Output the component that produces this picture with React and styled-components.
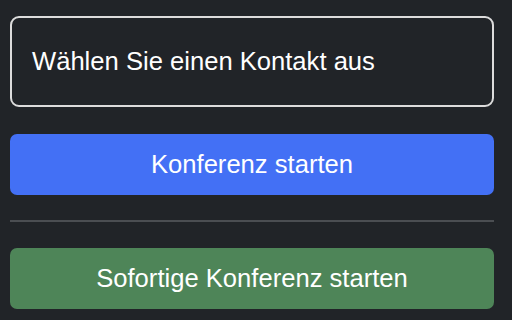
import React from "react";
import styled, { createGlobalStyle } from "styled-components";

const Global = createGlobalStyle`
  html, body { margin: 0; padding: 0; background: #212428; }
  body { font-family: "Liberation Sans", Arial, sans-serif; }
  * { box-sizing: border-box; }
`;

const Page = styled.div`
  display: flex;
  flex-direction: column;
  padding: 16px 18px 11px 10px;
  width: 512px;
  height: 320px;
  background: #212428;
`;

const Select = styled.div`
  height: 91px;
  border: 2px solid #dcdcdc;
  border-radius: 9px;
  background: #212428;
  color: #ffffff;
  font-size: 25.6px;
  display: flex;
  align-items: center;
  padding: 0 0 0 20px;
`;

const Button = styled.button`
  height: 61px;
  border: none;
  border-radius: 7px;
  background: ${(p) => p.$bg};
  color: #ffffff;
  font-family: "Liberation Sans", Arial, sans-serif;
  font-size: 25.6px;
  display: flex;
  align-items: center;
  justify-content: center;
  padding: 0;
  margin-top: ${(p) => p.$mt}px;
`;

const Divider = styled.hr`
  margin: 25px 0 0 0;
  border: none;
  height: 2px;
  background: #4b4e52;
`;

export default function App() {
  return (
    <>
      <Global />
      <Page>
        <Select>Wählen Sie einen Kontakt aus</Select>
        <Button $bg="#4370f5" $mt={27}>Konferenz starten</Button>
        <Divider />
        <Button $bg="#4e8558" $mt={26}>Sofortige Konferenz starten</Button>
      </Page>
    </>
  );
}
